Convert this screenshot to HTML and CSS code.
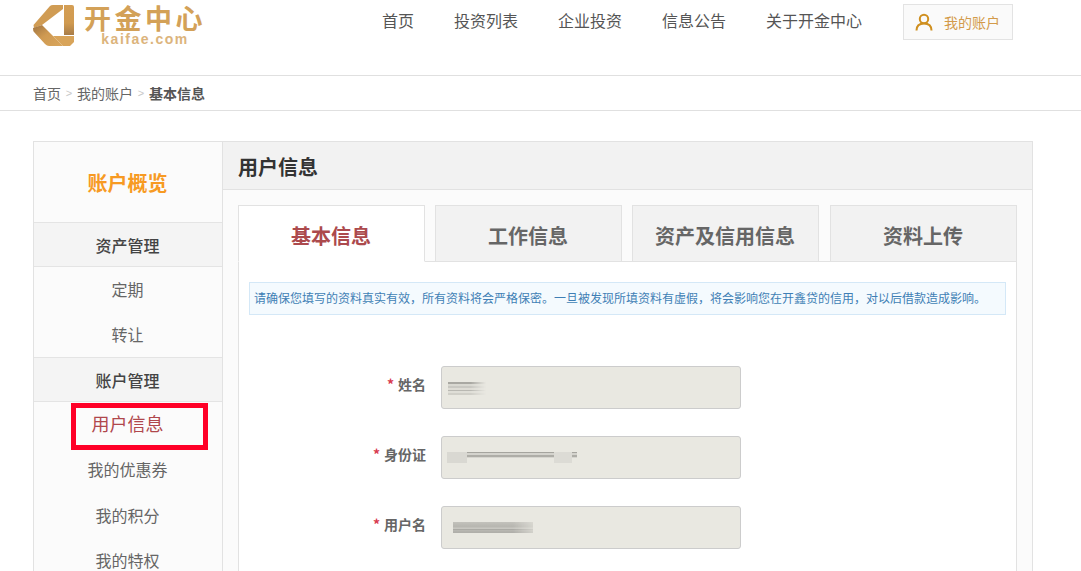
FILE: index.html
```html
<!DOCTYPE html>
<html lang="zh-CN">
<head>
<meta charset="utf-8">
<title>用户信息</title>
<link rel="stylesheet" href="styles.css">
</head>
<body>
<header class="top">
  <div class="wrap top-row">
    <a class="logo">
      <svg class="logo-mark" viewBox="0 0 42 41" width="42" height="41">
        <defs>
          <linearGradient id="g2" x1="0" y1="0" x2="1" y2="1"><stop offset="0" stop-color="#a07441"/><stop offset="0.45" stop-color="#cf9a52"/><stop offset="1" stop-color="#d9a65c"/></linearGradient>
          <linearGradient id="g3" x1="0" y1="0" x2="0" y2="1"><stop offset="0" stop-color="#d49e54"/><stop offset="0.6" stop-color="#d09a50"/><stop offset="1" stop-color="#a87c48"/></linearGradient>
        </defs>
        <path d="M0.5 20 L17 1 Q18 0 20 0 L30 0 L30 4 L9 20 L1 23 Z" fill="#d09c54"/>
        <path d="M0 23 L9 20 L30 41 L16 41 Q14 41 12 39 L1 27 Q0 26 0 23 Z" fill="url(#g2)"/>
        <path d="M20 31 L41 31 L41 37 L37 41 L30 41 Z" fill="#d8a45a"/>
        <path d="M31 0 L39 0 Q41 0 41 2 L41 30 L31 30 Z" fill="url(#g3)"/>
      </svg>
      <span class="logo-text">
        <span class="logo-cn">开金中心</span>
        <span class="logo-en">kaifae.com</span>
      </span>
    </a>
    <nav class="nav">
      <a>首页</a><a>投资列表</a><a>企业投资</a><a>信息公告</a><a>关于开金中心</a>
    </nav>
    <a class="account">
      <svg viewBox="0 0 18 18" width="18" height="18"><circle cx="9" cy="6" r="4.2" fill="none" stroke="#cf8f1f" stroke-width="2"/><path d="M1.5 17.5 C1.5 12.5 5 10.5 9 10.5 C13 10.5 16.5 12.5 16.5 17.5" fill="none" stroke="#cf8f1f" stroke-width="2"/></svg>
      <span>我的账户</span>
    </a>
  </div>
</header>

<div class="crumbs">
  <div class="wrap crumb-row">
    <a>首页</a><i>&gt;</i><a>我的账户</a><i>&gt;</i><b>基本信息</b>
  </div>
</div>

<main class="wrap card">
  <aside class="side">
    <div class="side-title">账户概览</div>
    <div class="side-group">资产管理</div>
    <a class="side-item">定期</a>
    <a class="side-item">转让</a>
    <div class="side-group">账户管理</div>
    <a class="side-item current">用户信息<span class="mark"></span></a>
    <a class="side-item">我的优惠券</a>
    <a class="side-item">我的积分</a>
    <a class="side-item">我的特权</a>
  </aside>
  <section class="content">
    <h1 class="content-head">用户信息</h1>
    <div class="content-body">
      <div class="tabs">
        <a class="tab active">基本信息</a>
        <a class="tab">工作信息</a>
        <a class="tab">资产及信用信息</a>
        <a class="tab">资料上传</a>
      </div>
      <div class="panel">
        <p class="notice">请确保您填写的资料真实有效，所有资料将会严格保密。一旦被发现所填资料有虚假，将会影响您在开鑫贷的信用，对以后借款造成影响。</p>
        <form class="form">
          <div class="row">
            <label class="label"><em>*</em> 姓名</label>
            <div class="input"><span class="smear smear-name"></span></div>
          </div>
          <div class="row">
            <label class="label"><em>*</em> 身份证</label>
            <div class="input"><span class="smear smear-id"></span></div>
          </div>
          <div class="row">
            <label class="label"><em>*</em> 用户名</label>
            <div class="input"><span class="smear smear-user"></span></div>
          </div>
        </form>
      </div>
    </div>
  </section>
</main>
</body>
</html>
```
FILE: styles.css
```css
* { box-sizing: border-box; }
html, body { margin: 0; height: 571px; overflow: hidden; background: #fff; }
body { font-family: "Noto Sans CJK SC", "Liberation Sans", sans-serif; color: #555; }
a { color: inherit; text-decoration: none; }
.wrap { width: 1000px; margin-left: 33px; }

.top { height: 76px; border-bottom: 1px solid #e0e0e0; }
.top-row { display: flex; align-items: flex-start; }
.logo { display: flex; gap: 8px; width: 349px; padding-top: 5px; }
.logo-mark { flex: none; }
.logo-text { display: flex; flex-direction: column; align-items: center; width: 124px; margin-top: -2px; }
.logo-cn { height: 29px; font-size: 27px; line-height: 29px; font-weight: 700; color: #d3a158; letter-spacing: 3.5px; white-space: nowrap; }
.logo-en { font-size: 14px; line-height: 14px; font-family: "Liberation Sans", sans-serif; font-weight: 700; color: #dcb47c; letter-spacing: 1.5px; }
.nav { display: flex; gap: 40px; width: 521px; padding-top: 9px; font-size: 16px; line-height: 23px; color: #555; white-space: nowrap; }
.account { display: flex; align-items: center; gap: 11px; width: 110px; height: 36px; margin-top: 4px; padding-left: 11px; padding-bottom: 1px; border: 1px solid #e3e3e3; background: #fafafa; font-size: 14px; line-height: 20px; color: #d39a4a; }
.account svg { flex: none; }

.crumbs { height: 35px; border-bottom: 1px solid #e0e0e0; }
.crumb-row { display: flex; align-items: center; height: 33px; font-size: 14px; color: #666; }
.crumb-row i { font-style: normal; color: #c8c8c8; font-size: 11px; width: 16px; text-align: center; font-family: "Liberation Sans", sans-serif; }
.crumb-row b { font-weight: 700; color: #555; }

.card { display: flex; margin-top: 30px; height: 600px; border: 1px solid #e2e2e2; background: #fbfbfb; }
.side { width: 189px; flex: none; border-right: 1px solid #e2e2e2; }
.side-title { height: 80px; padding-right: 1px; display: flex; align-items: center; justify-content: center; font-size: 20px; font-weight: 700; color: #f79a23; }
.side-group { height: 45px; padding-right: 1px; display: flex; align-items: center; justify-content: center; border-top: 1px solid #e4e4e4; border-bottom: 1px solid #e4e4e4; background: #f4f4f4; font-size: 16px; font-weight: 500; color: #444; }
.side-item { position: relative; display: flex; align-items: center; justify-content: center; height: 45px; padding-right: 1px; padding-bottom: 1px; font-size: 16px; color: #666; }
.side-item.current { color: #b0474c; font-size: 18px; padding-bottom: 4px; }
.side-item.current + .side-item ~ .side-item { padding-bottom: 0; }
.mark { position: absolute; left: 37px; top: 1px; width: 137px; height: 47px; border: 5px solid #ff0027; }

.content { flex: 1; min-width: 0; }
.content-head { height: 48px; margin: 0; padding-left: 15px; padding-top: 1px; display: flex; align-items: center; background: #f2f2f2; border-bottom: 1px solid #e2e2e2; font-size: 20px; font-weight: 700; color: #333; }
.content-body { padding: 15px 15px 0; }
.tabs { display: flex; gap: 10px; height: 57px; }
.tab { width: 187px; height: 57px; padding-top: 4px; padding-right: 1px; display: flex; align-items: center; justify-content: center; border: 1px solid #e2e2e2; background: #f2f2f2; font-size: 20px; font-weight: 700; color: #666; }
.tab:last-child { margin-left: 1px; }
.tab.active { background: #fff; border-bottom-color: #fff; color: #ac4a4d; position: relative; z-index: 1; }
.panel { margin-top: -1px; border: 1px solid #e2e2e2; background: #fff; padding: 20px 10px 0; height: 400px; }
.notice { margin: 0; height: 33px; display: flex; align-items: center; padding-left: 4px; padding-bottom: 2px; border: 1px solid #d4e8f7; background: #f4fafe; font-size: 12px; color: #3f7fb5; white-space: nowrap; }
.form { padding-top: 51px; display: flex; flex-direction: column; gap: 27px; }
.row { display: flex; align-items: flex-start; gap: 15px; }
.label { width: 177px; height: 36px; display: flex; justify-content: flex-end; align-items: center; gap: 4px; font-size: 14px; font-weight: 700; color: #666; }
.label em { font-style: normal; color: #d83a50; font-weight: 700; }
.input { width: 300px; height: 43px; border: 1px solid #ccc; border-radius: 3px; background: #e9e8e1; padding-top: 14px; padding-left: 6px; overflow: hidden; }
.smear { display: block; filter: blur(0.6px); }
.smear-name { width: 38px; height: 14px; background: linear-gradient(180deg, #e9e8e1 0 1px, #a9a8a2 1px 3px, #d9d8d1 3px 5px, #c9c8c2 5px 7px, #dedcd5 7px 9px, #b9b8b2 9px 10px, #dfded7 10px 12px, #d0cfc8 12px 14px); -webkit-mask-image: linear-gradient(90deg, #000 60%, transparent); mask-image: linear-gradient(90deg, #000 60%, transparent); }
.smear-id { width: 130px; height: 11px; margin-left: -1px; margin-top: 1px; background: linear-gradient(90deg, #d9d8d2 0 20px, transparent 20px 107px, #dcdbd5 107px 125px, transparent 125px), linear-gradient(180deg, #a5a49e 0 1px, #d4d3cd 1px 3px, #aeada7 3px 5px, #d6d5cf 5px 6px, transparent 6px); }
.smear-user { width: 80px; height: 11px; margin-left: 5px; margin-top: 1px; background: linear-gradient(180deg, #c3c2bc, #b7b6b0 40%, #c9c8c2 60%, #9d9c97 72%, #cfcec8 82%, #8f8e89 92%, #dcdbd5); -webkit-mask-image: linear-gradient(90deg, #000 75%, rgba(0,0,0,.4)); mask-image: linear-gradient(90deg, #000 75%, rgba(0,0,0,.4)); }
```
